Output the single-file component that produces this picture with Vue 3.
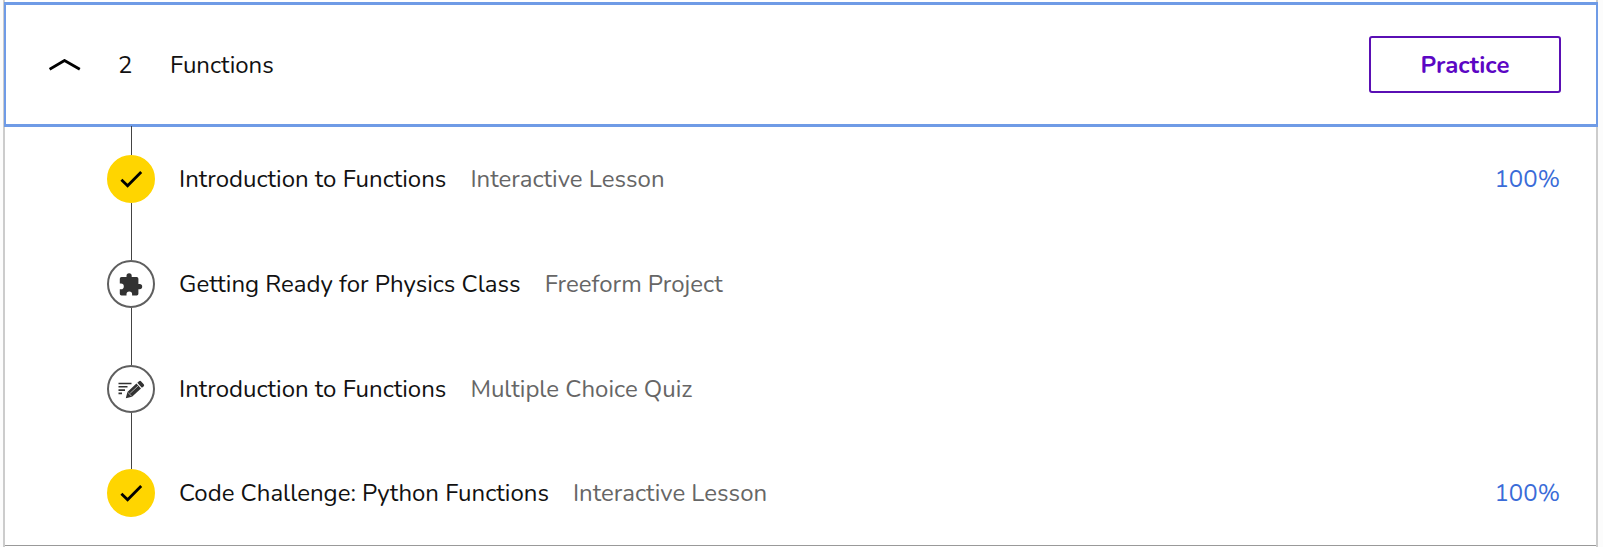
<script setup>
import { ref } from 'vue'

const open = ref(true)
const lessons = [
  { title: 'Introduction to Functions', kind: 'Interactive Lesson', icon: 'check', score: '100%' },
  { title: 'Getting Ready for Physics Class', kind: 'Freeform Project', icon: 'puzzle' },
  { title: 'Introduction to Functions', kind: 'Multiple Choice Quiz', icon: 'quiz' },
  { title: 'Code Challenge: Python Functions', kind: 'Interactive Lesson', icon: 'check', score: '100%' },
]
</script>

<template>
  <main class="page">
    <section class="panel">
      <header class="head">
        <button class="toggle" type="button" :aria-expanded="open" @click="open = !open">
          <svg class="chevron" :class="{ closed: !open }" viewBox="0 0 32 12" aria-hidden="true">
            <path d="M0.6 10.3 15.5 1.500 30.8 10.3" fill="none" stroke="#000" stroke-width="2.8" />
          </svg>
          <span class="number">2</span>
          <span>Functions</span>
        </button>
        <button class="practice" type="button">Practice</button>
      </header>
      <ol v-if="open" class="list">
        <li v-for="(lesson, i) in lessons" :key="i" class="row">
          <div class="track">
            <span class="line"></span>
            <span class="badge" :class="{ done: lesson.icon === 'check' }">
              <svg v-if="lesson.icon === 'check'" viewBox="0 0 48 48" aria-hidden="true">
                <path d="M14.4 24.7 20.6 30.7 34.2 16.9" fill="none" stroke="#000" stroke-width="2.8" />
              </svg>
              <svg v-else-if="lesson.icon === 'puzzle'" viewBox="0 0 48 48" aria-hidden="true">
                <path
                  fill="#323232"
                  d="M14.5 17h5v-1.2a2.6 2.6 0 0 1 5.2 0V17h5a1.7 1.7 0 0 1 1.7 1.7V24h1.2a2.6 2.6 0 0 1 0 5.2h-1.2v4.6a1.7 1.7 0 0 1-1.7 1.7h-4.6v-1.2a2.8 2.8 0 0 0-5.6 0v1.2h-5a1.7 1.7 0 0 1-1.7-1.7v-4.6h1.2a2.8 2.8 0 0 0 0-5.6h-1.2v-4.9a1.7 1.7 0 0 1 1.7-1.7z"
                />
              </svg>
              <svg v-else viewBox="0 0 48 48" aria-hidden="true">
                <path d="M11.5 18.5h13M11.5 21.8h9M11.5 25.1h6.5M11.5 28.4h3.5" fill="none" stroke="#323232" stroke-width="1.6" />
                <path
                  fill="#323232"
                  d="M18.8 33.3 20.4 26.9 29.4 18.6 34 23.6 25 31.8zM30.3 17.8 32 16.3a1.6 1.6 0 0 1 2.2.1l2.5 2.8a1.6 1.6 0 0 1-.1 2.2L34.9 22.8z"
                />
                <path d="M21 27.4 24.6 31.3M23.2 28.2 31 21" fill="none" stroke="#fff" stroke-width=".6" />
              </svg>
            </span>
            <span class="line" :class="{ hidden: i === lessons.length - 1 }"></span>
          </div>
          <a class="title" href="#">{{ lesson.title }}</a>
          <span class="kind">{{ lesson.kind }}</span>
          <span v-if="lesson.score" class="score">{{ lesson.score }}</span>
        </li>
      </ol>
    </section>
  </main>
</template>

<style>
body {
  margin: 0;
  background: #fcfcfc;
}
</style>

<style scoped>
.page {
  padding: 0 5px 0 3px;
  color: #111;
  font: 400 24px/32px Nunito, 'Open Sans', 'Noto Sans', sans-serif;
}
.panel {
  padding: 2px 0 1px;
  border: solid #ccc;
  border-width: 0 2px;
  background: #fff;
}
.head {
  display: flex;
  align-items: center;
  justify-content: space-between;
  margin: 0 -2px 0 -1px;
  padding: 31px 35px 31px 43px;
  border: solid #6f9be6;
  border-width: 3px 2px;
}
button {
  border: 0;
  background: none;
  font: inherit;
  color: inherit;
  cursor: pointer;
}
.toggle {
  display: flex;
  align-items: center;
  padding: 0;
}
.chevron {
  width: 32px;
  height: 12px;
}
.chevron.closed {
  transform: rotate(180deg);
}
.number {
  width: 52px;
  margin-left: 37px;
  text-align: left;
}
.practice {
  box-sizing: border-box;
  width: 192px;
  height: 57px;
  border: 2px solid #5a0fb4;
  border-radius: 3px;
  color: #5c06c4;
  font-weight: 700;
}
.list {
  margin: -1px 0 0;
  padding: 0;
  list-style: none;
  border-bottom: 1px solid #999;
}
.row {
  display: flex;
  align-items: center;
  gap: 24px;
  height: 105px;
  padding: 0 36px 0 102px;
}
.row:last-child {
  height: 104px;
}
.track {
  display: flex;
  flex-direction: column;
  align-items: center;
  align-self: stretch;
  width: 48px;
}
.line {
  flex: 1;
  width: 1px;
  background: #444;
}
.line.hidden {
  background: none;
}
.badge {
  box-sizing: border-box;
  display: flex;
  width: 48px;
  height: 48px;
  border: 2px solid #5f5f5f;
  border-radius: 50%;
}
.badge svg {
  flex: none;
  width: 48px;
  height: 48px;
  margin: -2px;
}
.badge.done {
  border-color: #ffd500;
  background: #ffd500;
}
.title {
  color: inherit;
  text-decoration: none;
}
.kind {
  color: #666;
}
.score {
  margin-left: auto;
  color: #3a6cd8;
}
</style>
